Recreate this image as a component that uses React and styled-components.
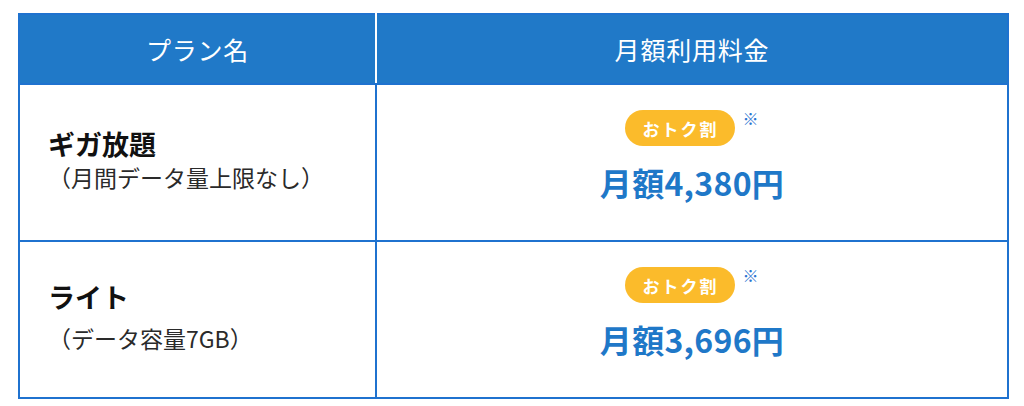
import styled, { createGlobalStyle } from "styled-components";

const GlobalStyle = createGlobalStyle`
  html, body {
    margin: 0;
    padding: 0;
    background: #fff;
  }
  body {
    font-family: "Noto Sans CJK JP", "Noto Sans", sans-serif;
  }
`;

const plans = [
  { name: "ギガ放題", note: "（月間データ量上限なし）", price: "月額4,380円", gap: 2 },
  { name: "ライト", note: "（データ容量7GB）", price: "月額3,696円", gap: 10 },
];

const App = () => {
  return (
    <>
      <GlobalStyle />
      <Page>
        <PlanTable>
          <thead>
            <tr>
              <HeadCell>プラン名</HeadCell>
              <HeadCell>月額利用料金</HeadCell>
            </tr>
          </thead>
          <tbody>
            {plans.map((plan) => (
              <tr key={plan.name}>
                <NameCell>
                  <PlanName>{plan.name}</PlanName>
                  <PlanNote $gap={plan.gap}>{plan.note}</PlanNote>
                </NameCell>
                <PriceCell>
                  <PriceBox>
                    <BadgeRow>
                      <Badge>おトク割</Badge>
                      <Mark>※</Mark>
                    </BadgeRow>
                    <Price>{plan.price}</Price>
                  </PriceBox>
                </PriceCell>
              </tr>
            ))}
          </tbody>
        </PlanTable>
      </Page>
    </>
  );
};

const Page = styled.div`
  padding: 13px 0 0 18px;
`;

const PlanTable = styled.table`
  width: 991px;
  border-collapse: collapse;
  table-layout: fixed;
`;

const HeadCell = styled.th`
  height: 68px;
  padding: 0;
  background: #2079c8;
  color: #fff;
  font-size: 25px;
  font-weight: 400;
  letter-spacing: 0.8px;
  border: 2px solid #1f72cf;

  &:first-child {
    width: 355px;
    border-right: 2px solid #fff;
  }
`;

const NameCell = styled.td`
  height: 149px;
  padding: 0 0 6px 28px;
  vertical-align: middle;
  border: 2px solid #1f72cf;
`;

const PlanName = styled.div`
  font-size: 27px;
  font-weight: 700;
  line-height: 32px;
  color: #111;
`;

const PlanNote = styled.div`
  margin-top: ${(props) => props.$gap}px;
  font-size: 23px;
  line-height: 30px;
  color: #2a2a2a;
`;

const PriceCell = styled.td`
  padding: 0;
  vertical-align: top;
  border: 2px solid #1f72cf;
`;

const PriceBox = styled.div`
  display: flex;
  flex-direction: column;
  align-items: center;
  padding-top: 25px;
`;

const BadgeRow = styled.div`
  display: flex;
  align-items: flex-start;
  gap: 7px;
`;

const Badge = styled.span`
  display: inline-flex;
  align-items: center;
  justify-content: center;
  width: 110px;
  height: 36px;
  border-radius: 18px;
  background: #fbbb2b;
  color: #fff;
  font-size: 17px;
  font-weight: 700;
  letter-spacing: 2px;
`;

const Mark = styled.span`
  font-size: 16px;
  line-height: 16px;
  font-weight: 700;
  color: #2a74d0;
`;

const Price = styled.div`
  margin-top: 16px;
  font-size: 32px;
  font-weight: 700;
  line-height: 40px;
  letter-spacing: 0.3px;
  color: #1f78c8;
`;

export default App;
